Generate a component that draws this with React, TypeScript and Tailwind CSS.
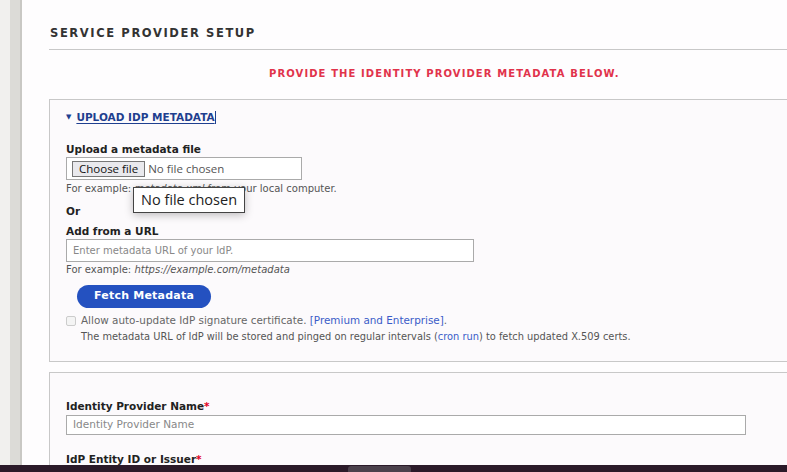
export default function App() {
  return (
    <div className="flex h-[472px] w-full flex-col overflow-hidden bg-[#fefdfe] font-['DejaVu_Sans',sans-serif]">
      <div className="flex min-h-0 flex-1">
        {/* admin side rail */}
        <div className="w-[10px] shrink-0 bg-[#f1f0ee]" />
        <div className="w-[12px] shrink-0 border-r-2 border-[#c9c8c4] bg-[#dcdbd7]" />

        <main className="min-w-0 flex-1 pl-[27px]">
          <h2 className="pl-px pt-[26px] text-[11.5px] font-bold uppercase leading-[14px] tracking-[0.14em] text-[#333]">
            Service Provider Setup
          </h2>
          <div className="mt-[9px] h-px bg-[#c8c8c8]" />

          <p className="mt-[17px] pl-[220px] text-[10px] font-bold uppercase leading-[13px] tracking-[0.11em] text-[#e1334b]">
            Provide the identity provider metadata below.
          </p>

          {/* metadata upload */}
          <section className="mt-[19px] h-[263px] border border-r-0 border-[#c8c8c8] bg-[#fcfafc] pl-[16px] pt-[10px]">
            <div className="flex items-center gap-[5px]">
              <span className="text-[7px] text-[#1f3f8f]">▼</span>
              <a className="text-[10.5px] font-bold uppercase leading-[14px] text-[#1f3f8f] underline underline-offset-2">
                Upload IdP Metadata
              </a>
              <span className="-ml-[5px] h-[13px] w-px bg-[#1f3f8f]" />
            </div>

            <div className="mt-[18px] text-[10.5px] font-bold leading-[14px] text-[#222]">Upload a metadata file</div>
            <div className="relative mt-[1px] flex h-[23px] w-[236px] items-center border border-[#aaa] bg-white px-[5px]">
              <span className="flex h-[16px] items-center border border-[#777] bg-[#e9e9ed] px-[6px] font-['Open_Sans',sans-serif] text-[11.5px] text-[#111]">
                Choose file
              </span>
              <span className="ml-[3px] font-['Open_Sans',sans-serif] text-[11.5px] text-[#555]">No file chosen</span>
            </div>
            <div className="relative mt-[2px] text-[10px] leading-[13px] text-[#555]">
              For example: <i>metadata.xml</i> from your local computer.
              <div className="absolute left-[67px] top-[5px] border border-[#444] bg-white px-[7px] py-[3px] font-['Open_Sans',sans-serif] text-[14.5px] leading-[18px] text-[#222] shadow-[0_2px_8px_rgba(0,0,0,0.25)]">
                No file chosen
              </div>
            </div>

            <div className="mt-[9px] text-[10.5px] font-bold leading-[14px] text-[#222]">Or</div>
            <div className="mt-[6px] text-[10.5px] font-bold leading-[14px] text-[#222]">Add from a URL</div>
            <div className="mt-[1px] flex h-[23px] w-[408px] items-center border border-[#aaa] bg-white px-[6px] text-[10px] text-[#888]">
              Enter metadata URL of your IdP.
            </div>
            <div className="mt-[1px] text-[10px] leading-[13px] text-[#555]">
              For example: <i>https://example.com/metadata</i>
            </div>

            <button className="ml-[11px] mt-[9px] flex h-[23px] w-[134px] items-center justify-center rounded-full bg-[#2451c0] text-[11px] font-bold tracking-[0.02em] text-white">
              Fetch Metadata
            </button>

            <div className="mt-[6px] flex items-center gap-[5px] text-[10.4px] leading-[13px] text-[#666]">
              <span className="h-[10px] w-[10px] rounded-[2px] border border-[#ccc] bg-[#f4f4f4]" />
              <span>
                Allow auto-update IdP signature certificate. <a className="text-[#3a5cc8]">[Premium and Enterprise]</a>.
              </span>
            </div>
            <div className="mt-[3px] pl-[15px] text-[9.85px] leading-[13px] text-[#555]">
              The metadata URL of IdP will be stored and pinged on regular intervals (
              <a className="text-[#3a5cc8]">cron run</a>) to fetch updated X.509 certs.
            </div>
          </section>

          {/* provider fields */}
          <section className="mt-[10px] h-[200px] border border-r-0 border-[#c8c8c8] bg-[#fcfafc] pl-[16px] pr-[41px] pt-[26px]">
            <div className="text-[10.5px] font-bold leading-[14px] text-[#222]">
              Identity Provider Name<span className="text-[#e1001e]">*</span>
            </div>
            <div className="mt-[2px] flex h-[20px] items-center border border-[#aaa] bg-white px-[6px] text-[10.5px] text-[#888]">
              Identity Provider Name
            </div>
            <div className="mt-[17px] text-[10.5px] font-bold leading-[14px] text-[#222]">
              IdP Entity ID or Issuer<span className="text-[#e1001e]">*</span>
            </div>
          </section>
        </main>
      </div>

      {/* desktop taskbar */}
      <div className="flex h-[7px] shrink-0 bg-[#2b1a29]">
        <div className="ml-[348px] mt-[1px] h-[6px] w-[63px] rounded-t-[3px] bg-[#4b404b]" />
      </div>
    </div>
  );
}
